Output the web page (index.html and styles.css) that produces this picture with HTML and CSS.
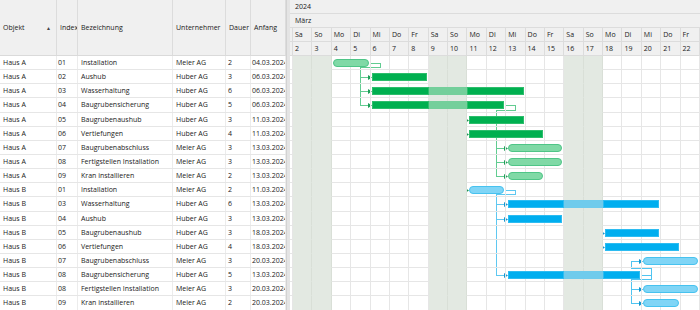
FILE: index.html
```html
<!DOCTYPE html>
<html lang="de">
<head>
  <meta charset="UTF-8">
  <title>Bauablauf Gantt</title>
  <link rel="stylesheet" href="styles.css">
</head>
<body>

<div class="app">
  <div class="grid">
    <div class="grid-head">
      <div class="hcell c-obj">Objekt<span class="sort">▲</span></div>
      <div class="hcell c-idx">Index</div>
      <div class="hcell c-bez">Bezeichnung</div>
      <div class="hcell c-unt">Unternehmer</div>
      <div class="hcell c-dau">Dauer</div>
      <div class="hcell c-anf">Anfang</div>
    </div>
    <div id="gridBody"></div>
  </div>

  <div class="splitter"></div>

  <div class="gantt">
    <div class="gantt-head">
      <div class="band">2024</div>
      <div class="band">März</div>
      <div class="tl" id="dayNames"></div>
      <div class="tl" id="dayNums"></div>
    </div>
    <div class="gantt-body" id="ganttBody">
      <svg class="links" id="links"></svg>
    </div>
  </div>
</div>

<script>
const tasks = [
  ['Haus A', '01', 'Installation', 'Meier AG', 2, 4, 'light', 'green'],
  ['Haus A', '02', 'Aushub', 'Huber AG', 3, 6, 'dark', 'green'],
  ['Haus A', '03', 'Wasserhaltung', 'Huber AG', 6, 6, 'dark', 'green'],
  ['Haus A', '04', 'Baugrubensicherung', 'Huber AG', 5, 6, 'dark', 'green'],
  ['Haus A', '05', 'Baugrubenaushub', 'Huber AG', 3, 11, 'dark', 'green'],
  ['Haus A', '06', 'Vertiefungen', 'Huber AG', 4, 11, 'dark', 'green'],
  ['Haus A', '07', 'Baugrubenabschluss', 'Meier AG', 3, 13, 'light', 'green'],
  ['Haus A', '08', 'Fertigstellen Installation', 'Meier AG', 3, 13, 'light', 'green'],
  ['Haus A', '09', 'Kran installieren', 'Meier AG', 2, 13, 'light', 'green'],
  ['Haus B', '01', 'Installation', 'Meier AG', 2, 11, 'light', 'blue'],
  ['Haus B', '03', 'Wasserhaltung', 'Huber AG', 6, 13, 'dark', 'blue'],
  ['Haus B', '04', 'Aushub', 'Huber AG', 3, 13, 'dark', 'blue'],
  ['Haus B', '05', 'Baugrubenaushub', 'Huber AG', 3, 18, 'dark', 'blue'],
  ['Haus B', '06', 'Vertiefungen', 'Huber AG', 4, 18, 'dark', 'blue'],
  ['Haus B', '07', 'Baugrubenabschluss', 'Meier AG', 3, 20, 'light', 'blue'],
  ['Haus B', '08', 'Baugrubensicherung', 'Huber AG', 5, 13, 'dark', 'blue'],
  ['Haus B', '08', 'Fertigstellen Installation', 'Meier AG', 3, 20, 'light', 'blue'],
  ['Haus B', '09', 'Kran installieren', 'Meier AG', 2, 20, 'light', 'blue']
];

// source row -> target rows
const links = [
  [0, [1, 2, 3], '#62cc91', '#1f9f58'],
  [1, [4, 5, 9], '#2fb96a', '#1a9550'],
  [3, [6, 7, 8], '#62cc91', '#1f9f58'],
  [9, [10, 11, 15], '#5fc8f1', '#1497cf'],
  [11, [12, 13], '#3fbff0', '#1497cf'],
  [15, [14, 16, 17], '#4fc4f1', '#1497cf']
];

const dayNames = ['Fr', 'Sa', 'So', 'Mo', 'Di', 'Mi', 'Do'];
const isWeekend = d => { const n = dayNames[(d - 1) % 7]; return n === 'Sa' || n === 'So'; };
const pad = n => String(n).padStart(2, '0');

// header
const names = document.getElementById('dayNames');
const nums = document.getElementById('dayNums');
for (let d = 1; d <= 22; d++) {
  names.innerHTML += `<div class="dc">${d > 1 ? dayNames[(d - 1) % 7] : ''}</div>`;
  nums.innerHTML += `<div class="dc">${d > 1 ? d : ''}</div>`;
}

const gridBody = document.getElementById('gridBody');
const ganttBody = document.getElementById('ganttBody');

tasks.forEach(t => {
  const [obj, idx, name, firm, dur, start, kind, color] = t;
  gridBody.innerHTML += `
    <div class="row">
      <div class="cell c-obj">${obj}</div>
      <div class="cell c-idx">${idx}</div>
      <div class="cell c-bez">${name}</div>
      <div class="cell c-unt">${firm}</div>
      <div class="cell c-dau">${dur}</div>
      <div class="cell c-anf">${pad(start)}.03.2024</div>
    </div>`;

  // work days -> segments (weekend parts drawn lighter)
  let d = start, left = dur, end = start;
  while (left > 0) { if (!isWeekend(d)) { left--; end = d; } d++; }
  const segs = [];
  for (let x = start; x <= end; x++) {
    const we = isWeekend(x);
    const last = segs[segs.length - 1];
    if (last && last.we === we) last.to = x; else segs.push({ from: x, to: x, we });
  }

  let cells = '';
  for (let c = 1; c <= 22; c++) cells += `<div class="gc${c > 1 && isWeekend(c) ? ' we' : ''}"></div>`;
  let bars = '';
  segs.forEach((s, i) => {
    const cls = ['bar', kind, color];
    if (s.we) cls.push('off');
    if (i === 0) cls.push('first');
    if (i === segs.length - 1) cls.push('last');
    bars += `<div class="${cls.join(' ')}" style="grid-column: ${s.from} / ${s.to + 1}"></div>`;
  });
  ganttBody.insertAdjacentHTML('beforeend', `
    <div class="grow">
      <div class="cells">${cells}</div>
      <div class="bars">${bars}</div>
    </div>`);
});

// dependency lines
const svg = document.getElementById('links');
const base = ganttBody.getBoundingClientRect();
const rows = ganttBody.querySelectorAll('.grow');
const rowBox = r => rows[r].getBoundingClientRect();
const barEnd = r => rows[r].querySelector('.bar.last').getBoundingClientRect().right - base.left;
const barStart = r => rows[r].querySelector('.bar.first').getBoundingClientRect().left - base.left;
const mid = r => Math.round((rowBox(r).top + rowBox(r).height / 2) - base.top) + 0.5;
let out = '';
links.forEach(([src, targets, line, head]) => {
  const x1 = Math.round(barEnd(src)) + 0.5;
  const y1 = mid(src);
  const xa = x1 + 11;
  targets.forEach(tg => {
    const xt = Math.round(barStart(tg));
    const yt = mid(tg);
    const yb = tg > src
      ? Math.round(rowBox(src).bottom - base.top) - 2.5
      : Math.round(rowBox(src).top - base.top) + 0.5;
    const xb = xt - 11.5;
    out += `<path d="M${x1} ${y1} H${xa} V${yb} H${xb} V${yt} H${xt - 3}" stroke="${line}" />`;
    out += `<polygon points="${xt - 4},${yt - 2.5} ${xt},${yt} ${xt - 4},${yt + 2.5}" fill="${head}" />`;
  });
});
svg.innerHTML = out;
</script>

</body>
</html>
```

FILE: styles.css
```css
body {
  margin: 0;
  font-family: "Open Sans", "Noto Sans", sans-serif;
  font-size: 7px;
  color: #1a1a1a;
  background: #fff;
  overflow: hidden;
}
.app {
  display: flex;
  width: 700px;
  height: 310px;
  overflow: hidden;
}
.grid {
  width: 286px;
  flex: none;
}
.grid-head {
  display: flex;
  height: 56px;
  background: #f0f0f0;
  border-bottom: 1px solid #dadada;
  box-sizing: border-box;
}
.hcell {
  display: flex;
  align-items: center;
  padding-left: 3px;
  border-right: 1px solid #dcdcdc;
  box-sizing: border-box;
  overflow: hidden;
  white-space: nowrap;
}
.hcell.c-idx {
  padding-left: 3px;
}
.sort {
  margin-left: auto;
  margin-right: 5px;
  font-size: 5px;
  color: #444;
}
.c-obj { width: 57px; flex: none; }
.c-idx { width: 21px; flex: none; }
.c-bez { width: 95px; flex: none; }
.c-unt { width: 53px; flex: none; }
.c-dau { width: 25px; flex: none; }
.c-anf { width: 35px; flex: none; }
.row {
  display: flex;
  height: 14.15px;
  border-bottom: 1px solid #e6e6e6;
  box-sizing: border-box;
}
.cell {
  display: flex;
  align-items: center;
  padding-left: 3px;
  border-right: 1px solid #ececec;
  box-sizing: border-box;
  overflow: hidden;
  white-space: nowrap;
}
.cell.c-idx, .cell.c-anf {
  padding-left: 1px;
}
.cell.c-dau {
  padding-left: 2px;
}
.splitter {
  width: 4px;
  flex: none;
  background: #e4e4e4;
  border-left: 1px solid #d2d2d2;
  box-sizing: border-box;
}
.gantt {
  flex: 1;
  min-width: 0;
  overflow: hidden;
}
.gantt-head {
  background: #f0f0f0;
}
.band {
  height: 14px;
  display: flex;
  align-items: center;
  padding-left: 5px;
  border-bottom: 1px solid #dcdcdc;
  box-sizing: border-box;
}
.tl {
  display: grid;
  grid-template-columns: 3px repeat(21, 1fr);
  height: 14px;
  border-bottom: 1px solid #dcdcdc;
  box-sizing: border-box;
}
.dc {
  display: flex;
  align-items: center;
  padding-left: 2px;
  border-right: 1px solid #dcdcdc;
  overflow: hidden;
}
.gantt-body {
  position: relative;
}
.grow {
  position: relative;
  height: 14.15px;
}
.cells, .bars {
  display: grid;
  grid-template-columns: 3px repeat(21, 1fr);
  height: 100%;
}
.bars {
  position: absolute;
  inset: 0;
}
.gc {
  border-right: 1px solid #e6e6e6;
  border-bottom: 1px solid #e6e6e6;
  box-sizing: border-box;
}
.gc.we {
  background: #e3e9e2;
  border-right-color: #d9dfd7;
  border-bottom-color: #e3e9e2;
}
.bar {
  grid-row: 1;
  align-self: center;
  height: 8px;
  box-sizing: border-box;
}
.bar.first { margin-left: 1.5px; }
.bar.last { margin-right: 2px; }
.bar.dark.green {
  background: #00b050;
  border: 1px solid #2dbd6c;
}
.bar.dark.blue {
  background: #00aeef;
  border: 1px solid #2dbcf1;
}
.bar.dark.green.off {
  background: #74cf9b;
  border-color: #74cf9b;
}
.bar.dark.blue.off {
  background: #6fcbec;
  border-color: #6fcbec;
}
.bar.light {
  border-radius: 4px;
}
.bar.light.green {
  background: #80d9a6;
  border: 1px solid #4fc587;
}
.bar.light.blue {
  background: #80d5f6;
  border: 1px solid #47c2ef;
}
.links {
  position: absolute;
  top: 0;
  left: 0;
  width: 100%;
  height: 100%;
  pointer-events: none;
  fill: none;
  stroke-width: 1;
  shape-rendering: crispEdges;
}
.links polygon {
  stroke: none;
  shape-rendering: auto;
}
```
